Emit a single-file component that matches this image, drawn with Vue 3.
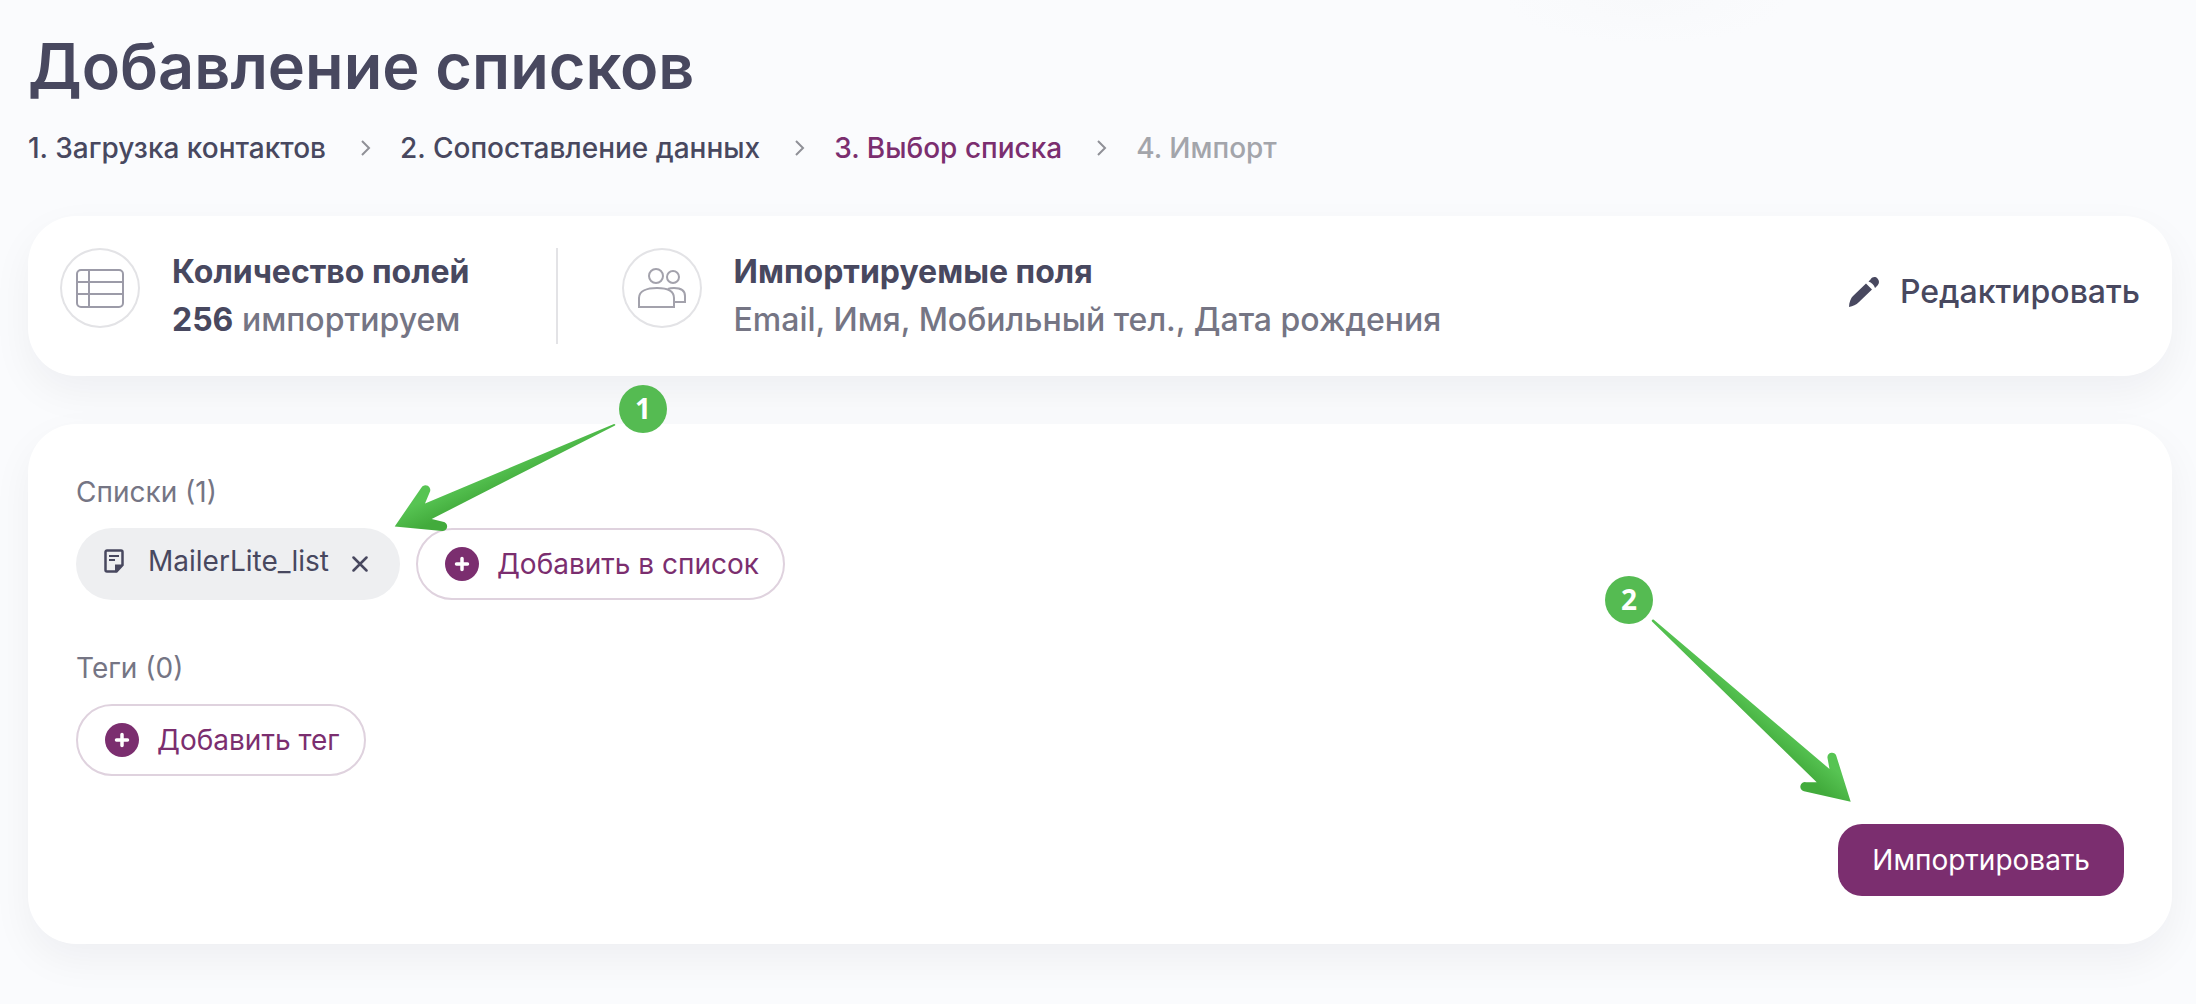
<script setup>
const steps = [
  { label: '1. Загрузка контактов', state: 'done' },
  { label: '2. Сопоставление данных', state: 'done' },
  { label: '3. Выбор списка', state: 'current' },
  { label: '4. Импорт', state: 'upcoming' },
]
const lists = ['MailerLite_list']
const tags = []
</script>

<template>
  <main class="page">
    <h1 class="title">Добавление списков</h1>

    <nav aria-label="Шаги импорта">
      <ol class="steps">
        <li v-for="(step, i) in steps" :key="step.label" class="step" :class="step.state">
          <svg v-if="i > 0" class="chevron" viewBox="0 0 12 16" aria-hidden="true">
            <path d="M2 1l7 7-7 7" fill="none" stroke="#8f9097" stroke-width="2" />
          </svg>
          <span>{{ step.label }}</span>
        </li>
      </ol>
    </nav>

    <section class="card summary">
      <div class="stat">
        <span class="badge-icon">
          <svg viewBox="0 0 80 80" fill="none" stroke="#9c9ba8" stroke-width="2" aria-hidden="true">
            <rect x="17" y="22" width="46" height="37" rx="4" />
            <path d="M17 34h46M17 46h46M29 22v37" />
          </svg>
        </span>
        <div class="stat-text">
          <h2 class="stat-title">Количество полей</h2>
          <p class="stat-value"><strong>256</strong> импортируем</p>
        </div>
      </div>
      <div class="stat bordered">
        <span class="badge-icon">
          <svg viewBox="0 0 80 80" fill="none" stroke="#a3a2ac" stroke-width="2" aria-hidden="true">
            <circle cx="34" cy="28" r="7" />
            <circle cx="51" cy="29" r="6" />
            <path d="M17 59v-9c0-7 8-10 18-10s17 3 17 10v9z" />
            <path d="M46 41c2-1 4-1 6-1 7 0 11 3 11 8v6H53" />
          </svg>
        </span>
        <div class="stat-text">
          <h2 class="stat-title">Импортируемые поля</h2>
          <p class="stat-value">Email, Имя, Мобильный тел., Дата рождения</p>
        </div>
      </div>
      <button type="button" class="edit">
        <svg class="pencil" viewBox="0 0 32 32" fill="#48485f" aria-hidden="true">
          <path d="M1 31c0-5 2-9 4-11L18 7.500l6 6L11 26c-3 3-6 4-10 5z" />
          <path d="M20.500 5.500l2-2c2-3 5-3 7-1s2 5 0 7l-2.500 2.500c-1-3-3.500-5.500-6.500-6.500z" />
        </svg>
        Редактировать
      </button>
    </section>

    <section class="card form">
      <div class="group">
        <h3 class="group-label">Списки ({{ lists.length }})</h3>
        <div class="chips">
          <span v-for="name in lists" :key="name" class="chip">
            <span class="chip-label">
              <svg class="note" viewBox="0 0 20 24" aria-hidden="true">
                <path d="M3 1.500h14a1.500 1.500 0 0 1 1.500 1.500v13l-6 6.500H3A1.500 1.500 0 0 1 1.500 21V3A1.500 1.500 0 0 1 3 1.500z" fill="none" stroke="#48485f" stroke-width="2.500" />
                <path d="M5 7h10M5 11h6" stroke="#48485f" stroke-width="2" />
                <path d="M11 15.500h8l-8 8z" fill="#48485f" />
              </svg>
              {{ name }}
            </span>
            <button type="button" class="remove" aria-label="Удалить список">
              <svg viewBox="0 0 16 16" fill="none" stroke="#48485f" stroke-width="2.500" stroke-linecap="round" aria-hidden="true">
                <path d="M1.500 1.500l13 13M14.500 1.500l-13 13" />
              </svg>
            </button>
          </span>
          <button type="button" class="add">
            <svg class="plus" viewBox="0 0 34 34" aria-hidden="true">
              <circle cx="17" cy="17" r="17" fill="#7b2e6f" />
              <path d="M17 11.500v11M11.500 17h11" stroke="#fff" stroke-width="3.500" stroke-linecap="round" />
            </svg>
            Добавить в список
          </button>
        </div>
      </div>

      <div class="group">
        <h3 class="group-label">Теги ({{ tags.length }})</h3>
        <div class="chips">
          <button type="button" class="add">
            <svg class="plus" viewBox="0 0 34 34" aria-hidden="true">
              <circle cx="17" cy="17" r="17" fill="#7b2e6f" />
              <path d="M17 11.500v11M11.500 17h11" stroke="#fff" stroke-width="3.500" stroke-linecap="round" />
            </svg>
            Добавить тег
          </button>
        </div>
      </div>

      <div class="actions">
        <button type="button" class="submit">Импортировать</button>
      </div>

      <div class="callout callout-lists">
        <svg viewBox="0 0 230 116" aria-hidden="true">
          <defs>
            <linearGradient id="arrow-lists" gradientUnits="userSpaceOnUse" x1="34" y1="80" x2="44" y2="102">
              <stop offset="0" stop-color="#57c453" />
              <stop offset="1" stop-color="#42ab3c" />
            </linearGradient>
          </defs>
          <path d="M4.700 106.500L31.300 67.700A4.700 4.700 0 0 1 39.700 72.300L35 83.500L224 3.900Q226 4 225 5.600L41.700 99L53 101.800A4.600 4.600 0 0 1 52 111z" fill="url(#arrow-lists)" />
        </svg>
        <span class="number">1</span>
      </div>
      <div class="callout callout-submit">
        <svg viewBox="0 0 210 190" aria-hidden="true">
          <defs>
            <linearGradient id="arrow-submit" gradientUnits="userSpaceOnUse" x1="186" y1="151" x2="170" y2="170">
              <stop offset="0" stop-color="#57c453" />
              <stop offset="1" stop-color="#42ab3c" />
            </linearGradient>
          </defs>
          <path d="M205.700 186.700L191.500 141.500A4.500 4.500 0 0 0 182.500 143L184.500 154L8.500 4.500Q6 4.500 7 6.500L171.700 167.300L161 167.200A4.600 4.600 0 0 0 159 176.300z" fill="url(#arrow-submit)" />
        </svg>
        <span class="number">2</span>
      </div>
    </section>
  </main>
</template>

<style>
body {
  background: #fafbfd;
}
</style>

<style scoped>
.page {
  padding: 28px 24px 60px 28px;
  font-family: Inter, "Liberation Sans", sans-serif;
  font-size: 28px;
  line-height: 40px;
  color: #48485f;
  background: radial-gradient(140px 44px at 75% 0, #f8f9fb, #fafbfd);
}
h1, h2, h3, p, ol {
  margin: 0;
  padding: 0;
}
button {
  font: inherit;
  color: inherit;
  background: none;
  border: 0;
  padding: 0;
  cursor: pointer;
}
svg {
  display: block;
  flex: none;
}
.title {
  font-size: 63px;
  line-height: 76px;
  font-weight: 600;
}
.steps {
  display: flex;
  flex-wrap: wrap;
  margin-top: 24px;
  list-style: none;
  font-weight: 500;
}
.step {
  display: flex;
  align-items: center;
}
.current {
  color: #7b2e6f;
}
.upcoming {
  color: #a3a5ab;
}
.chevron {
  width: 12px;
  height: 16px;
  margin: 0 28px 0 34px;
}
.card {
  position: relative;
  margin-top: 48px;
  background: #fff;
  border-radius: 48px;
  box-shadow: 0 16px 40px rgba(20, 20, 30, 0.05);
}
.summary {
  display: flex;
  align-items: flex-start;
  padding: 32px;
}
.stat {
  display: flex;
  gap: 32px;
  padding-right: 86px;
}
.bordered {
  padding-left: 64px;
  border-left: 2px solid #e3e3e6;
}
.badge-icon {
  flex: none;
  width: 80px;
  height: 80px;
  box-sizing: border-box;
  border-radius: 50%;
  box-shadow: inset 0 0 0 2px #e3e3e6;
}
.stat-title,
.stat-value {
  font-size: 32px;
  line-height: 48px;
}
.stat-title {
  font-weight: 700;
}
.stat-value {
  font-weight: 500;
  color: #757584;
}
.stat-value strong {
  font-weight: 700;
  color: #48485f;
}
.edit {
  display: flex;
  align-items: center;
  gap: 20px;
  margin-left: auto;
  padding: 20px 0;
  font-size: 32px;
  line-height: 48px;
  font-weight: 500;
}
.pencil {
  width: 32px;
  height: 32px;
}
.form {
  display: flex;
  flex-direction: column;
  gap: 48px;
  padding: 48px;
}
.group-label {
  font-size: 28px;
  font-weight: 400;
  color: #757584;
}
.chips {
  display: flex;
  flex-wrap: wrap;
  gap: 16px;
  margin-top: 16px;
}
.chip,
.add {
  display: flex;
  align-items: center;
  box-sizing: border-box;
  height: 72px;
  border-radius: 36px;
}
.chip {
  gap: 23px;
  padding: 0 32px 0 28px;
  background: #eeeff1;
}
.chip-label {
  display: flex;
  align-items: center;
  gap: 24px;
  padding-bottom: 6px;
}
.note {
  width: 20px;
  height: 24px;
}
.remove svg {
  width: 16px;
  height: 16px;
}
.add {
  gap: 18px;
  padding: 0 24px 0 27px;
  border: 2px solid #dfd2de;
  color: #7b2e6f;
}
.plus {
  width: 34px;
  height: 34px;
}
.actions {
  display: flex;
  justify-content: flex-end;
}
.submit {
  padding: 16px 34px;
  border-radius: 24px;
  background: #7b2e6f;
  color: #fff;
}
.callout {
  position: absolute;
  pointer-events: none;
}
.callout-lists {
  top: -4px;
  left: 362px;
  width: 230px;
}
.callout-submit {
  right: 317px;
  bottom: 139px;
  width: 210px;
}
.number {
  position: absolute;
  width: 48px;
  height: 48px;
  border-radius: 50%;
  background: #55bb52;
  color: #fff;
  font-family: "Open Sans", sans-serif;
  font-weight: 700;
  line-height: 46px;
  text-align: center;
}
.callout-lists .number {
  left: 229px;
  top: -35px;
}
.callout-submit .number {
  left: -40px;
  top: -39px;
}
</style>
